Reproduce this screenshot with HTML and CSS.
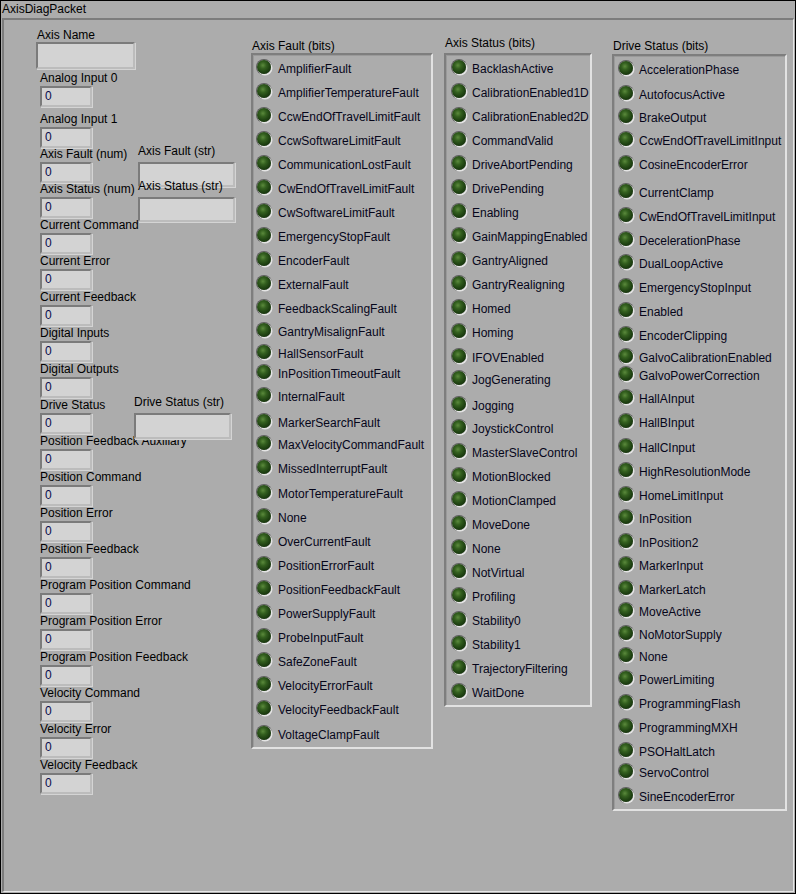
FILE: index.html
```html
<!DOCTYPE html>
<html>
<head>
<meta charset="utf-8">
<title>AxisDiagPacket</title>
<link rel="stylesheet" href="styles.css">
</head>
<body>
<div class="window">
  <div class="title">AxisDiagPacket</div>
  <div class="frame">
    <div class="left">
      <div class="name-label">Axis Name</div>
      <div class="box name-box"></div>
      <div class="rows">
        <div class="row"><div class="num"><div class="lbl">Analog Input 0</div><div class="box numbox">0</div></div></div>
        <div class="row gap5"><div class="num"><div class="lbl">Analog Input 1</div><div class="box numbox">0</div></div></div>
        <div class="row up1"><div class="num"><div class="lbl">Axis Fault (num)</div><div class="box numbox">0</div></div>
          <div class="str"><div class="lbl">Axis Fault (str)</div><div class="box strbox"></div></div></div>
        <div class="row up1"><div class="num"><div class="lbl">Axis Status (num)</div><div class="box numbox">0</div></div>
          <div class="str"><div class="lbl">Axis Status (str)</div><div class="box strbox"></div></div></div>
        <div class="row"><div class="num"><div class="lbl">Current Command</div><div class="box numbox">0</div></div></div>
        <div class="row"><div class="num"><div class="lbl">Current Error</div><div class="box numbox">0</div></div></div>
        <div class="row"><div class="num"><div class="lbl">Current Feedback</div><div class="box numbox">0</div></div></div>
        <div class="row"><div class="num"><div class="lbl">Digital Inputs</div><div class="box numbox">0</div></div></div>
        <div class="row"><div class="num"><div class="lbl">Digital Outputs</div><div class="box numbox">0</div></div></div>
        <div class="row"><div class="num"><div class="lbl">Drive Status</div><div class="box numbox">0</div></div>
          <div class="str shift"><div class="lbl">Drive Status (str)</div><div class="box strbox tall"></div></div></div>
        <div class="row"><div class="num"><div class="lbl">Position Feedback Auxiliary</div><div class="box numbox">0</div></div></div>
        <div class="row"><div class="num"><div class="lbl">Position Command</div><div class="box numbox">0</div></div></div>
        <div class="row"><div class="num"><div class="lbl">Position Error</div><div class="box numbox">0</div></div></div>
        <div class="row"><div class="num"><div class="lbl">Position Feedback</div><div class="box numbox">0</div></div></div>
        <div class="row"><div class="num"><div class="lbl">Program Position Command</div><div class="box numbox">0</div></div></div>
        <div class="row"><div class="num"><div class="lbl">Program Position Error</div><div class="box numbox">0</div></div></div>
        <div class="row"><div class="num"><div class="lbl">Program Position Feedback</div><div class="box numbox">0</div></div></div>
        <div class="row"><div class="num"><div class="lbl">Velocity Command</div><div class="box numbox">0</div></div></div>
        <div class="row"><div class="num"><div class="lbl">Velocity Error</div><div class="box numbox">0</div></div></div>
        <div class="row"><div class="num"><div class="lbl">Velocity Feedback</div><div class="box numbox">0</div></div></div>
      </div>
    </div>

    <div class="bits fault">
      <div class="bits-label">Axis Fault (bits)</div>
      <div class="bits-box">
        <div class="led-row"><span class="led"></span><span>AmplifierFault</span></div>
        <div class="led-row"><span class="led"></span><span>AmplifierTemperatureFault</span></div>
        <div class="led-row"><span class="led"></span><span>CcwEndOfTravelLimitFault</span></div>
        <div class="led-row"><span class="led"></span><span>CcwSoftwareLimitFault</span></div>
        <div class="led-row"><span class="led"></span><span>CommunicationLostFault</span></div>
        <div class="led-row"><span class="led"></span><span>CwEndOfTravelLimitFault</span></div>
        <div class="led-row"><span class="led"></span><span>CwSoftwareLimitFault</span></div>
        <div class="led-row"><span class="led"></span><span>EmergencyStopFault</span></div>
        <div class="led-row"><span class="led"></span><span>EncoderFault</span></div>
        <div class="led-row"><span class="led"></span><span>ExternalFault</span></div>
        <div class="led-row"><span class="led"></span><span>FeedbackScalingFault</span></div>
        <div class="led-row up1"><span class="led"></span><span>GantryMisalignFault</span></div>
        <div class="led-row up2"><span class="led"></span><span>HallSensorFault</span></div>
        <div class="led-row up4"><span class="led"></span><span>InPositionTimeoutFault</span></div>
        <div class="led-row up1"><span class="led"></span><span>InternalFault</span></div>
        <div class="led-row dn2"><span class="led"></span><span>MarkerSearchFault</span></div>
        <div class="led-row up1"><span class="led"></span><span>MaxVelocityCommandFault</span></div>
        <div class="led-row"><span class="led"></span><span>MissedInterruptFault</span></div>
        <div class="led-row dn1"><span class="led"></span><span>MotorTemperatureFault</span></div>
        <div class="led-row"><span class="led"></span><span>None</span></div>
        <div class="led-row"><span class="led"></span><span>OverCurrentFault</span></div>
        <div class="led-row"><span class="led"></span><span>PositionErrorFault</span></div>
        <div class="led-row"><span class="led"></span><span>PositionFeedbackFault</span></div>
        <div class="led-row"><span class="led"></span><span>PowerSupplyFault</span></div>
        <div class="led-row"><span class="led"></span><span>ProbeInputFault</span></div>
        <div class="led-row"><span class="led"></span><span>SafeZoneFault</span></div>
        <div class="led-row"><span class="led"></span><span>VelocityErrorFault</span></div>
        <div class="led-row"><span class="led"></span><span>VelocityFeedbackFault</span></div>
        <div class="led-row dn1"><span class="led"></span><span>VoltageClampFault</span></div>
      </div>
    </div>

    <div class="bits status">
      <div class="bits-label">Axis Status (bits)</div>
      <div class="bits-box">
        <div class="led-row"><span class="led"></span><span>BacklashActive</span></div>
        <div class="led-row"><span class="led"></span><span>CalibrationEnabled1D</span></div>
        <div class="led-row"><span class="led"></span><span>CalibrationEnabled2D</span></div>
        <div class="led-row"><span class="led"></span><span>CommandValid</span></div>
        <div class="led-row"><span class="led"></span><span>DriveAbortPending</span></div>
        <div class="led-row"><span class="led"></span><span>DrivePending</span></div>
        <div class="led-row"><span class="led"></span><span>Enabling</span></div>
        <div class="led-row"><span class="led"></span><span>GainMappingEnabled</span></div>
        <div class="led-row"><span class="led"></span><span>GantryAligned</span></div>
        <div class="led-row"><span class="led"></span><span>GantryRealigning</span></div>
        <div class="led-row"><span class="led"></span><span>Homed</span></div>
        <div class="led-row"><span class="led"></span><span>Homing</span></div>
        <div class="led-row dn1"><span class="led"></span><span>IFOVEnabled</span></div>
        <div class="led-row up2"><span class="led"></span><span>JogGenerating</span></div>
        <div class="led-row dn2"><span class="led"></span><span>Jogging</span></div>
        <div class="led-row up1"><span class="led"></span><span>JoystickControl</span></div>
        <div class="led-row"><span class="led"></span><span>MasterSlaveControl</span></div>
        <div class="led-row"><span class="led"></span><span>MotionBlocked</span></div>
        <div class="led-row"><span class="led"></span><span>MotionClamped</span></div>
        <div class="led-row"><span class="led"></span><span>MoveDone</span></div>
        <div class="led-row"><span class="led"></span><span>None</span></div>
        <div class="led-row"><span class="led"></span><span>NotVirtual</span></div>
        <div class="led-row"><span class="led"></span><span>Profiling</span></div>
        <div class="led-row"><span class="led"></span><span>Stability0</span></div>
        <div class="led-row"><span class="led"></span><span>Stability1</span></div>
        <div class="led-row"><span class="led"></span><span>TrajectoryFiltering</span></div>
        <div class="led-row"><span class="led"></span><span>WaitDone</span></div>
      </div>
    </div>

    <div class="bits drive">
      <div class="bits-label">Drive Status (bits)</div>
      <div class="bits-box">
        <div class="led-row"><span class="led"></span><span>AccelerationPhase</span></div>
        <div class="led-row dn1"><span class="led"></span><span>AutofocusActive</span></div>
        <div class="led-row up1"><span class="led"></span><span>BrakeOutput</span></div>
        <div class="led-row"><span class="led"></span><span>CcwEndOfTravelLimitInput</span></div>
        <div class="led-row"><span class="led"></span><span>CosineEncoderError</span></div>
        <div class="led-row dn4"><span class="led"></span><span>CurrentClamp</span></div>
        <div class="led-row"><span class="led"></span><span>CwEndOfTravelLimitInput</span></div>
        <div class="led-row"><span class="led"></span><span>DecelerationPhase</span></div>
        <div class="led-row"><span class="led"></span><span>DualLoopActive</span></div>
        <div class="led-row"><span class="led"></span><span>EmergencyStopInput</span></div>
        <div class="led-row"><span class="led"></span><span>Enabled</span></div>
        <div class="led-row"><span class="led"></span><span>EncoderClipping</span></div>
        <div class="led-row up2"><span class="led"></span><span>GalvoCalibrationEnabled</span></div>
        <div class="led-row up5"><span class="led"></span><span>GalvoPowerCorrection</span></div>
        <div class="led-row up1"><span class="led"></span><span>HallAInput</span></div>
        <div class="led-row"><span class="led"></span><span>HallBInput</span></div>
        <div class="led-row dn1"><span class="led"></span><span>HallCInput</span></div>
        <div class="led-row"><span class="led"></span><span>HighResolutionMode</span></div>
        <div class="led-row"><span class="led"></span><span>HomeLimitInput</span></div>
        <div class="led-row"><span class="led"></span><span>InPosition</span></div>
        <div class="led-row"><span class="led"></span><span>InPosition2</span></div>
        <div class="led-row up1"><span class="led"></span><span>MarkerInput</span></div>
        <div class="led-row"><span class="led"></span><span>MarkerLatch</span></div>
        <div class="led-row up2"><span class="led"></span><span>MoveActive</span></div>
        <div class="led-row"><span class="led"></span><span>NoMotorSupply</span></div>
        <div class="led-row up2"><span class="led"></span><span>None</span></div>
        <div class="led-row up1"><span class="led"></span><span>PowerLimiting</span></div>
        <div class="led-row"><span class="led"></span><span>ProgrammingFlash</span></div>
        <div class="led-row"><span class="led"></span><span>ProgrammingMXH</span></div>
        <div class="led-row dn1"><span class="led"></span><span>PSOHaltLatch</span></div>
        <div class="led-row up3"><span class="led"></span><span>ServoControl</span></div>
        <div class="led-row"><span class="led"></span><span>SineEncoderError</span></div>
      </div>
    </div>
  </div>
</div>
</body>
</html>
```

FILE: styles.css
```css
* { box-sizing: border-box; }
html, body { margin: 0; padding: 0; }
body {
  font-family: "Liberation Sans", Arial, sans-serif;
  font-size: 12px;
  color: #000;
  background: #acacac;
}
.window {
  width: 796px;
  height: 894px;
  border: 1px solid #000;
  background: #acacac;
  display: flex;
  flex-direction: column;
}
.title {
  height: 17px;
  padding: 1px 0 0 1px;
  line-height: 14px;
}
.frame {
  flex: 1;
  margin: 0 1px 1px 1px;
  border-style: solid;
  border-width: 2px 1px 1px 2px;
  border-color: #7c7c7c #e6e6e6 #e6e6e6 #7c7c7c;
  display: flex;
  align-items: flex-start;
  padding-left: 32px;
}

/* left column */
.left { width: 215px; padding-top: 8px; flex: none; }
.name-label { line-height: 14px; padding-left: 1px; }
.box {
  background: #d3d3d3;
  border-style: solid;
  border-width: 2px;
  border-color: #7b7b7b #bcbcbc #bcbcbc #7b7b7b;
  box-shadow: 1px 1px 0 #d4d4d4;
}
.name-box { width: 99px; height: 27px; }
.rows { margin-top: 2px; }
.row { display: flex; height: 36px; }
.row.gap5 { margin-top: 5px; }
.row.up1 { margin-top: -1px; }
.num { width: 98px; margin-left: 4px; flex: none; }
.lbl { line-height: 14px; white-space: nowrap; }
.numbox {
  width: 52px;
  height: 21px;
  margin-top: 1px;
  padding-left: 3px;
  line-height: 17px;
  color: #0a0a4a;
}
.str { position: relative; z-index: 1; margin-top: -3px; flex: none; }
.str.shift { margin-left: -4px; }
.strbox { width: 97px; height: 25px; margin-top: 4px; }
.strbox.tall { height: 26px; }

/* boolean arrays */
.bits { display: flex; flex-direction: column; flex: none; }
.fault { width: 182px; margin-top: 19px; }
.status { width: 148px; margin-left: 11px; margin-top: 16px; }
.drive { width: 175px; margin-left: 20px; margin-top: 19px; }
.bits-label { line-height: 14px; padding-left: 1px; white-space: nowrap; }
.status .bits-label { margin-bottom: 3px; }
.drive .bits-label { margin-bottom: 1px; }
.bits-box {
  display: flex;
  flex-direction: column;
  border-style: solid;
  border-width: 2px;
  border-color: #7e7e7e #e2e2e2 #e2e2e2 #7e7e7e;
  box-shadow: inset 1px 1px 0 #9a9a9a;
}
.fault .bits-box { height: 696px; padding: 2px 0 0 4px; }
.status .bits-box { height: 654px; padding: 2px 0 0 6px; }
.drive .bits-box { height: 757px; padding: 2px 0 0 5px; }
.led-row {
  display: flex;
  align-items: center;
  height: 24px;
  gap: 6px;
  white-space: nowrap;
  color: #06061a;
}
.fault .led-row { gap: 7px; }
.led-row.up1 { margin-top: -1px; }
.led-row.up2 { margin-top: -2px; }
.led-row.up3 { margin-top: -3px; }
.led-row.up4 { margin-top: -4px; }
.led-row.up5 { margin-top: -5px; }
.led-row.dn1 { margin-top: 1px; }
.led-row.dn2 { margin-top: 2px; }
.led-row.dn3 { margin-top: 3px; }
.led-row.dn4 { margin-top: 4px; }
.led {
  flex: none;
  width: 14px;
  height: 14px;
  margin-bottom: 4px;
  border-radius: 50%;
  background: radial-gradient(circle at 42% 38%, #5b8a3c 0%, #34601f 28%, #1f4212 58%, #0d2207 100%);
  box-shadow: 1px 1px 0 0.5px #e4e4e4, 0 0 0 1px #5e5e5e;
}
```
